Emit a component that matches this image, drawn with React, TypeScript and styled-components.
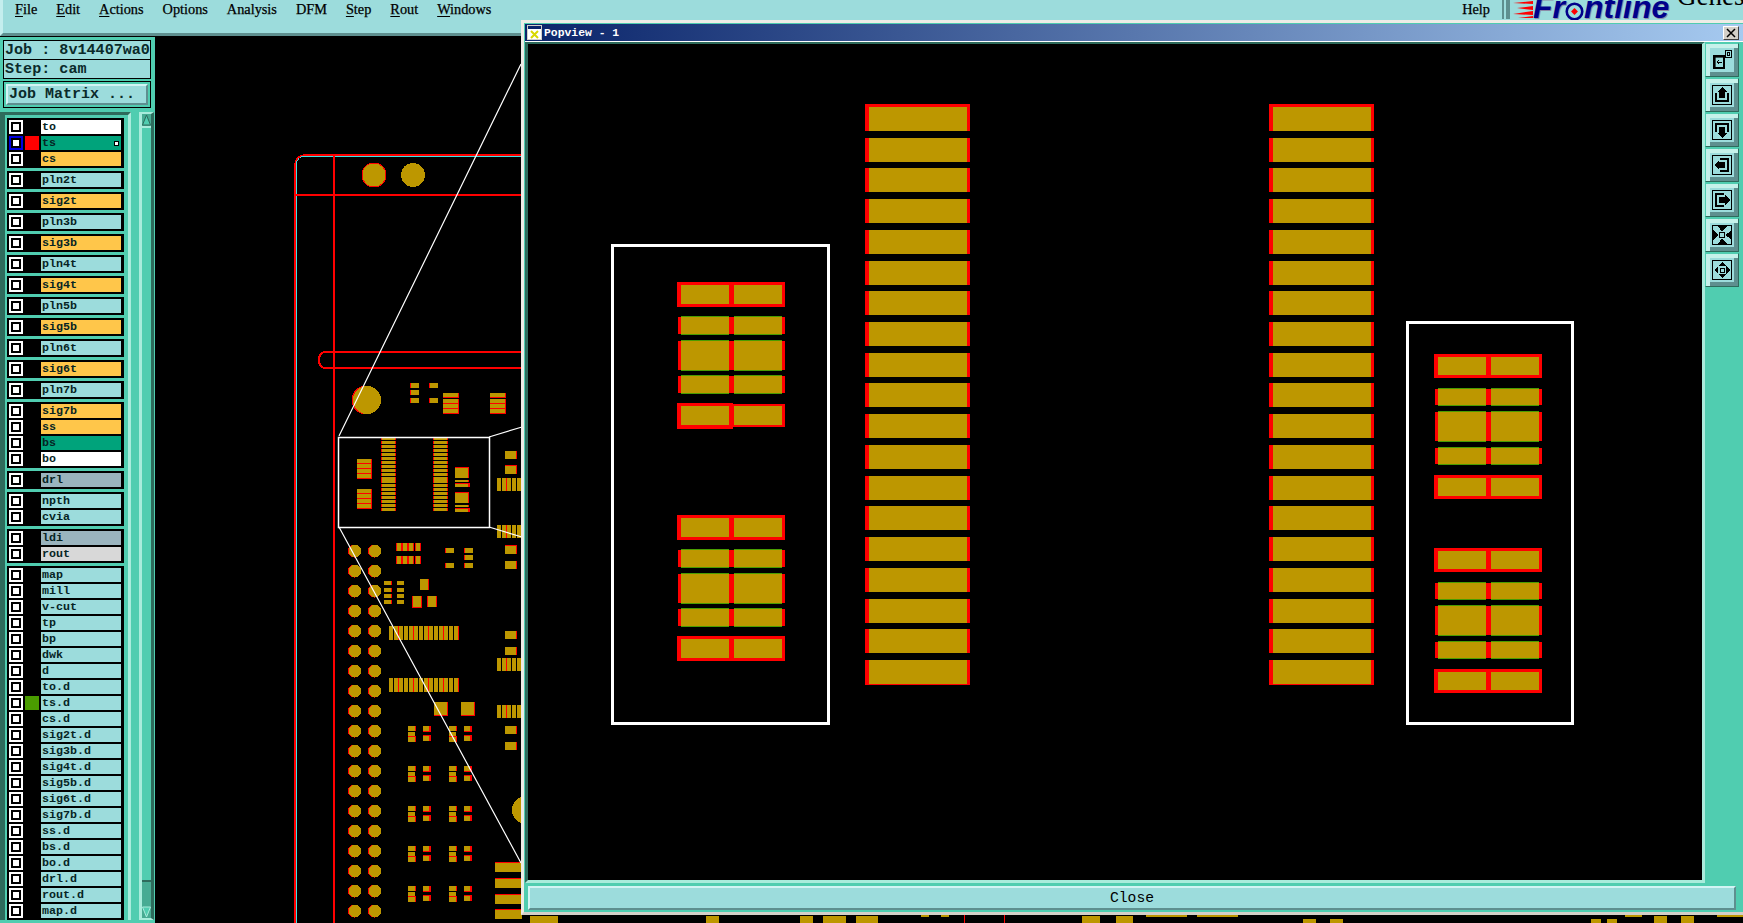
import React from "react";
import styled, { createGlobalStyle } from "styled-components";

const TEAL = "#50cdb0";
const CYAN = "#9cdcdc";
const DARK = "#2e6b5c";
const LIGHT = "#a9ecdc";
const GOLD = "#bd9700";
const RED = "#ff0000";
const GREEN = "#4a9c00";

const GlobalStyle = createGlobalStyle`
  html, body {
    margin: 0;
    height: 100%;
    overflow: hidden;
    background: #000;
    font-family: "Liberation Mono", monospace;
  }
`;

type LayerColor = "white" | "green" | "orange" | "cyan" | "slate" | "gray";

interface Layer {
  name: string;
  color: LayerColor;
  swatch?: string;
  active?: boolean;
  mark?: boolean;
}

const layerBg: Record<LayerColor, string> = {
  white: "#ffffff",
  green: "#00a37b",
  orange: "#ffc64a",
  cyan: CYAN,
  slate: "#9ab4be",
  gray: "#d8d8d8",
};

const cy = (name: string): Layer => ({ name, color: "cyan" });
const or = (name: string): Layer => ({ name, color: "orange" });

const layerGroups: Layer[][] = [
  [
    { name: "to", color: "white" },
    { name: "ts", color: "green", swatch: RED, active: true, mark: true },
    or("cs"),
  ],
  [cy("pln2t")],
  [or("sig2t")],
  [cy("pln3b")],
  [or("sig3b")],
  [cy("pln4t")],
  [or("sig4t")],
  [cy("pln5b")],
  [or("sig5b")],
  [cy("pln6t")],
  [or("sig6t")],
  [cy("pln7b")],
  [or("sig7b"), or("ss"), { name: "bs", color: "green" }, { name: "bo", color: "white" }],
  [{ name: "drl", color: "slate" }],
  [cy("npth"), cy("cvia")],
  [{ name: "ldi", color: "slate" }, { name: "rout", color: "gray" }],
  [
    cy("map"),
    cy("mill"),
    cy("v-cut"),
    cy("tp"),
    cy("bp"),
    cy("dwk"),
    cy("d"),
    cy("to.d"),
    { name: "ts.d", color: "cyan", swatch: GREEN },
    cy("cs.d"),
    cy("sig2t.d"),
    cy("sig3b.d"),
    cy("sig4t.d"),
    cy("sig5b.d"),
    cy("sig6t.d"),
    cy("sig7b.d"),
    cy("ss.d"),
    cy("bs.d"),
    cy("bo.d"),
    cy("drl.d"),
    cy("rout.d"),
    cy("map.d"),
  ],
];

const menus: [string, boolean][] = [
  ["File", true],
  ["Edit", true],
  ["Actions", true],
  ["Options", false],
  ["Analysis", false],
  ["DFM", false],
  ["Step", true],
  ["Rout", true],
  ["Windows", true],
];

const range = (n: number) => Array.from({ length: n }, (_, i) => i);

interface PadProps {
  x: number;
  y: number;
  w: number;
  h: number;
  l?: number;
  r?: number;
  t?: number;
  b?: number;
}

// gold copper with the red solder mask edge showing round it
const Pad = ({ x, y, w, h, l = 0, r = 1, t = 0, b = 0 }: PadProps) => (
  <>
    <rect x={x - l} y={y - t} width={w + l + r} height={h + t + b} fill={RED} />
    <rect x={x} y={y} width={w} height={h} fill={GOLD} />
  </>
);

const Cluster = ({ y }: { y: number }) => (
  <>
    {[408, 449].map((x) => (
      <React.Fragment key={x}>
        <Pad x={x} y={y} w={7} h={5} r={1} />
        <Pad x={x} y={y + 6} w={7} h={4} r={0} />
        <Pad x={x} y={y + 11} w={7} h={5} r={1} t={1} />
      </React.Fragment>
    ))}
    {[423, 464].map((x) => (
      <React.Fragment key={x}>
        <Pad x={x} y={y} w={6} h={5} r={2} b={1} />
        <Pad x={x} y={y + 10} w={6} h={5} r={2} t={1} />
      </React.Fragment>
    ))}
  </>
);

const FingerStrip = ({ x, y, n, h }: { x: number; y: number; n: number; h: number }) => (
  <>
    {range(n).map((i) => (
      <Pad key={i} x={x + i * 5} y={y} w={3.5} h={h} r={i % 3 === 1 ? 1 : 0} />
    ))}
  </>
);

const BoardView = () => (
  <CanvasSvg viewBox="155 37 1588 886" shapeRendering="crispEdges">
    <path d="M296 923V166q0-10 10-10H522" fill="none" stroke="#3fe0e6" strokeWidth="1" />
    <path d="M295 923V166q0-11 11-11H522" fill="none" stroke={RED} strokeWidth="1.5" />
    <rect x="333" y="156" width="2" height="767" fill={RED} />
    <rect x="296" y="194" width="226" height="2" fill={RED} />
    <circle cx="374" cy="175" r="12.5" fill={RED} />
    <circle cx="374" cy="175" r="11.5" fill={GOLD} />
    <circle cx="413" cy="175" r="12" fill={GOLD} />
    <path d="M522 352H326q-7 0-7 8t7 8H522" fill="none" stroke={RED} strokeWidth="2" />
    <circle cx="366" cy="400" r="14.5" fill={RED} />
    <circle cx="367" cy="400" r="14" fill={GOLD} />

    {[383, 390, 398].map((y) => <Pad key={y} x={411} y={y} w={8} h={5} l={1} r={0} />)}
    {[383, 398].map((y) => <Pad key={y} x={430} y={y} w={8} h={5} l={1} r={0} />)}
    {[443, 490].map((x) =>
      [393, 399, 404, 409].map((y) => <Pad key={x + y} x={x} y={y} w={15} h={4} b={1} />)
    )}

    {[381, 433].map((x) =>
      range(19).map((i) => (
        <Pad key={x + i} x={x + 1} y={437 + i * 3.95} w={13} h={3} l={1} r={1} />
      ))
    )}
    {[459, 489].map((y) =>
      [0, 5, 10, 15].map((d) => <Pad key={y + d} x={357} y={y + d} w={14} h={4} b={1} r={1} />)
    )}
    {[468, 493].map((y) => (
      <React.Fragment key={y}>
        <Pad x={455} y={y} w={13} h={10} r={1} t={1} />
        <Pad x={455} y={y + 12} w={13} h={2} />
        <Pad x={455} y={y + 16} w={13} h={3} t={1} r={2} />
      </React.Fragment>
    ))}

    {[355, 375].map((x) =>
      range(19).map((i) => (
        <React.Fragment key={x + i}>
          <circle cx={x - 0.5} cy={551 + i * 20} r="6.5" fill={RED} />
          <circle cx={x} cy={551 + i * 20} r="6.2" fill={GOLD} />
        </React.Fragment>
      ))
    )}

    {[397, 404, 410, 416].map((x, i) => (
      <React.Fragment key={x}>
        <Pad x={397 + i * 6.2} y={543} w={4} h={8} l={1} />
        <Pad x={397 + i * 6.2} y={556} w={4} h={8} l={1} />
      </React.Fragment>
    ))}
    <Pad x={446} y={548} w={8} h={5} l={1} r={0} />
    <Pad x={446} y={563} w={8} h={5} l={1} r={0} />
    {[548, 555, 563].map((y) => <Pad key={y} x={465} y={y} w={8} h={5} l={1} r={0} />)}
    {[581, 588, 594, 600].map((y) => (
      <React.Fragment key={y}>
        <Pad x={384} y={y} w={7} h={4} r={1} />
        <Pad x={397} y={y} w={7} h={4} r={0} />
      </React.Fragment>
    ))}
    <Pad x={420} y={579} w={8} h={11} />
    <Pad x={413} y={596} w={8} h={11} l={1} b={1} />
    <Pad x={428} y={596} w={8} h={11} l={1} />
    <FingerStrip x={389} y={626} n={14} h={14} />
    <FingerStrip x={389} y={678} n={14} h={14} />
    <Pad x={434} y={702} w={13} h={13} r={1} b={1} />
    <Pad x={461} y={702} w={13} h={13} r={1} b={1} />
    {[726, 766, 806, 846, 886].map((y) => <Cluster key={y} y={y} />)}

    {[451, 466, 546, 561, 631, 647, 726, 742].map((y) => (
      <Pad key={y} x={505} y={y} w={11} h={8} r={1} t={y === 466 || y === 546 ? 1 : 0} />
    ))}
    {[478, 525, 658, 705].map((y) => <FingerStrip key={y} x={497} y={y} n={5} h={13} />)}
    <circle cx="526" cy="810" r="14" fill={GOLD} />
    {[863, 879, 895, 910].map((y) => <Pad key={y} x={495} y={y} w={27} h={9} t={1} r={0} />)}

    {[
      [530, 28], [706, 13], [800, 13], [823, 23], [856, 22], [1082, 18], [1116, 17],
      [1303, 13], [1330, 13], [1591, 10], [1607, 10], [1654, 13], [1681, 13],
    ].map(([x, w]) => (
      <rect key={x} x={x} y={x > 1300 && x < 1620 ? 919 : 916} width={w} height="7" fill={GOLD} />
    ))}
    {[[921, 8], [941, 8], [1146, 41], [1197, 41], [1717, 26], [1625, 17]].map(([x, w]) => (
      <rect key={x} x={x} y="915" width={w} height="2" fill={GOLD} />
    ))}
    <rect x="964" y="915" width="1" height="8" fill={RED} />
    <rect x="1004" y="915" width="1" height="8" fill={RED} />

    <g fill="none" stroke="#fff" strokeWidth="1.2" shapeRendering="auto">
      <rect x="338.5" y="437.5" width="151" height="90" strokeWidth="1.5" />
      <path d="M339 436L521 64M489 437L522 427M489 527L522 537M339 527L521 863" />
    </g>
  </CanvasSvg>
);

type RowKind = "box" | "half" | "plain";

const padRows = (first: [RowKind, number, number][], shift: number) => [
  ...first,
  ...first.map(([k, y, h]): [RowKind, number, number] => [k === "half" ? "box" : k, y + shift, h]),
];

const PadRow = ({ kind, x, y, h }: { kind: RowKind; x: number; y: number; h: number }) => (
  <>
    {kind === "box" && <rect x={x - 4} y={y - 3} width={108} height={h + 6} fill={RED} />}
    {kind === "half" && (
      <>
        <rect x={x + 49} y={y - 2} width={55} height={h + 4} fill={RED} />
        <rect x={x - 4} y={y - 3} width={56} height={h + 7} fill={RED} />
      </>
    )}
    {kind === "plain" && (
      <>
        <rect x={x - 3} y={y + 1} width={107} height={h - 2} fill={RED} />
        <rect x={x} y={y} width={48} height={h} fill={GREEN} />
        <rect x={x + 53} y={y} width={48} height={h} fill={GREEN} />
        <rect x={x} y={y + 1} width={48} height={h - 2} fill={GOLD} />
        <rect x={x + 53} y={y + 1} width={48} height={h - 2} fill={GOLD} />
      </>
    )}
    {kind !== "plain" && (
      <>
        <rect x={x} y={y} width={48} height={h} fill={GOLD} />
        <rect x={x + 53} y={y} width={48} height={h} fill={GOLD} />
      </>
    )}
  </>
);

const leftRows = padRows(
  [["box", 285, 19], ["plain", 316, 19], ["plain", 340, 31], ["plain", 375, 19], ["half", 406, 19]],
  233
);
const rightRows = padRows(
  [["box", 357, 18], ["plain", 388, 18], ["plain", 411, 31], ["plain", 447, 18], ["box", 478, 18]],
  194
);

const PopviewDrawing = () => (
  <CanvasSvg viewBox="528 44 1174 836" shapeRendering="crispEdges">
    <rect x="612.5" y="245.5" width="216" height="478" fill="none" stroke="#fff" strokeWidth="3" />
    <rect x="1407.5" y="322.5" width="165" height="401" fill="none" stroke="#fff" strokeWidth="3" />
    {leftRows.map(([k, y, h]) => <PadRow key={y} kind={k} x={681} y={y} h={h} />)}
    {rightRows.map(([k, y, h]) => <PadRow key={y} kind={k} x={1438} y={y} h={h} />)}
    {[869, 1273].map((x) =>
      range(19).map((i) => {
        const y = Math.round(107 + i * 30.72);
        return (
          <React.Fragment key={x + i}>
            <rect
              x={x - 4}
              y={i === 0 ? y - 3 : y}
              width={105}
              height={i === 0 ? 27 : i === 18 ? 25 : 24}
              fill={RED}
            />
            <rect x={x} y={y} width={98} height={24} fill={GOLD} />
          </React.Fragment>
        );
      })
    )}
  </CanvasSvg>
);

const IconFrame = () => <rect x="0.5" y="0.5" width="19" height="19" fill="none" stroke="#000" />;

const ArrowIcon = ({ turn }: { turn: number }) => (
  <IconSvg viewBox="0 0 20 20" shapeRendering="crispEdges">
    <IconFrame />
    <g transform={`rotate(${turn} 10 10)`}>
      <path d="M3 8V17H17V8H15V15H5V8Z" fill="#000" />
      <path d="M10 2L15 7H13V13H7V7H5Z" fill="#000" />
    </g>
  </IconSvg>
);

const PopoutIcon = () => (
  <IconSvg viewBox="0 0 20 20" shapeRendering="crispEdges">
    <path d="M1 5H13V19H1ZM3 7V17H11V7Z" fill="#000" fillRule="evenodd" />
    <path d="M3 7H11V17H3Z" fill="none" stroke="#000" strokeWidth="0.6" />
    <rect x="13.5" y="0.5" width="6" height="7" fill="none" stroke="#000" />
    <rect x="15.5" y="2.5" width="2" height="3" fill="none" stroke="#000" />
    <path d="M5 12H10M5 12L7 10M5 12L7 14" fill="none" stroke="#000" />
  </IconSvg>
);

const FitIcon = () => (
  <IconSvg viewBox="0 0 20 20" shapeRendering="crispEdges">
    <IconFrame />
    <rect x="7.5" y="7.5" width="5" height="5" fill="none" stroke="#000" strokeWidth="1.5" />
    <path
      d="M5 1H15L12 4L11 6H9L8 4ZM5 19H15L12 16L11 14H9L8 16ZM1 5L4 8L6 9V11L4 12L1 15ZM19 5L16 8L14 9V11L16 12L19 15Z"
      fill="#000"
    />
  </IconSvg>
);

const SpreadIcon = () => (
  <IconSvg viewBox="0 0 20 20" shapeRendering="crispEdges">
    <IconFrame />
    <rect x="8" y="8" width="4" height="4" fill="none" stroke="#000" />
    <path d="M10 2L14 6H6ZM10 18L14 14H6ZM2 10L6 6V14ZM18 10L14 6V14Z" fill="#000" />
  </IconSvg>
);

const App = () => (
  <Page>
    <GlobalStyle />
    <MenuBar>
      {menus.map(([label, under]) => (
        <MenuItem key={label}>
          {under ? <Mnemonic>{label[0]}</Mnemonic> : label[0]}
          {label.slice(1)}
        </MenuItem>
      ))}
      <HelpItem>Help</HelpItem>
      <Divider />
      <SpeedLines viewBox="0 0 20 18">
        <path d="M0 3L20 1V4ZM4 8L20 6V10ZM0 14L20 11V15ZM5 18L20 16V18Z" fill={RED} />
      </SpeedLines>
      <LogoText>
        Fr
        <LogoRing viewBox="0 0 22 22">
          <circle cx="11" cy="11" r="9" fill="none" stroke="#00008b" strokeWidth="3" />
          <path d="M11 7L15 11L11 15L7 11Z" fill={RED} />
        </LogoRing>
        ntline
      </LogoText>
      <ProductName>Genesis</ProductName>
    </MenuBar>

    <Body>
      <LeftPanel>
        <InfoBox>
          <InfoLine>Job : 8v14407wa0</InfoLine>
          <InfoLine>Step: cam</InfoLine>
        </InfoBox>
        <MatrixFrame>
          <MatrixButton>Job Matrix ...</MatrixButton>
        </MatrixFrame>
        <ListArea>
          <ListWell>
            {layerGroups.map((group) => (
              <LayerGroup key={group[0].name}>
                {group.map((layer) => (
                  <LayerRow key={layer.name}>
                    <CheckBox $active={layer.active}>
                      <CheckDot />
                    </CheckBox>
                    <Swatch $color={layer.swatch} />
                    <LayerName $color={layer.color}>
                      {layer.name}
                      {layer.mark && <LayerMark />}
                    </LayerName>
                  </LayerRow>
                ))}
              </LayerGroup>
            ))}
          </ListWell>
          <ScrollBar>
            <Trough>
              <ScrollArrow viewBox="0 0 9 12">
                <path d="M4.5 1L8.5 11H0.5Z" fill={TEAL} stroke={DARK} />
              </ScrollArrow>
              <Thumb />
              <ScrollArrow viewBox="0 0 9 12">
                <path d="M4.5 11L8.5 1H0.5Z" fill={TEAL} stroke={LIGHT} />
              </ScrollArrow>
            </Trough>
          </ScrollBar>
        </ListArea>
      </LeftPanel>
      <Canvas>
        <BoardView />
      </Canvas>
    </Body>

    <Popview>
      <TitleBar>
        <WindowIcon viewBox="0 0 15 15">
          <rect width="15" height="15" fill="#d4d0c8" />
          <rect x="1" y="1" width="13" height="13" fill="#fff" />
          <rect x="1" y="1" width="13" height="3" fill="#0a246a" />
          <path d="M4 6L11 13M11 6L4 13" stroke="#d8d800" strokeWidth="2" />
        </WindowIcon>
        <TitleText>Popview - 1</TitleText>
        <CloseBox>
          <svg viewBox="0 0 10 10" width="10" height="10">
            <path d="M1 1L9 9M9 1L1 9" stroke="#000" strokeWidth="1.5" />
          </svg>
        </CloseBox>
      </TitleBar>
      <PopBody>
        <Viewport>
          <PopviewDrawing />
        </Viewport>
        <ToolColumn>
          <ToolButton><PopoutIcon /></ToolButton>
          <ToolButton><ArrowIcon turn={0} /></ToolButton>
          <ToolButton><ArrowIcon turn={180} /></ToolButton>
          <ToolButton><ArrowIcon turn={-90} /></ToolButton>
          <ToolButton><ArrowIcon turn={90} /></ToolButton>
          <ToolButton><FitIcon /></ToolButton>
          <ToolButton><SpreadIcon /></ToolButton>
        </ToolColumn>
      </PopBody>
      <Footer>
        <CloseButton>Close</CloseButton>
      </Footer>
    </Popview>
  </Page>
);

export default App;

const Page = styled.div`
  position: relative;
  width: 100%;
  height: 100vh;
  overflow: hidden;
  display: flex;
  flex-direction: column;
  background: #000;
`;

const MenuBar = styled.div`
  height: 33px;
  flex: none;
  display: flex;
  align-items: flex-start;
  gap: 19px;
  padding-left: 12px;
  background: ${CYAN};
  border-left: 3px solid #c4eeee;
  border-bottom: 3px solid #5e8f8f;
  margin-bottom: 1px;
  overflow: hidden;
  font-family: "Liberation Serif", serif;
  color: #000;
`;

const MenuItem = styled.span`
  padding-top: 1px;
  font-size: 14.3px;
  line-height: 16px;
  -webkit-text-stroke: 0.25px #000;
`;

const Mnemonic = styled.span`
  text-decoration: underline;
  text-underline-offset: 2px;
`;

const HelpItem = styled(MenuItem)`
  margin-left: auto;
`;

const Divider = styled.div`
  width: 2px;
  height: 19px;
  flex: none;
  margin-left: -7px;
  background: #5e8f8f;
  border-right: 2px solid ${CYAN};
  box-shadow: 4px 0 0 #5e8f8f;
`;

const SpeedLines = styled.svg`
  width: 20px;
  height: 18px;
  flex: none;
  margin-left: -12px;
`;

const LogoText = styled.div`
  display: flex;
  align-items: center;
  flex: none;
  width: 144px;
  height: 20px;
  margin: -3px 0 0 -19px;
  font-family: "Liberation Sans", sans-serif;
  font-weight: bold;
  font-style: italic;
  font-size: 32px;
  line-height: 20px;
  color: #00008b;
  text-shadow: 1px 1px 0 #8c8ca8;
  white-space: nowrap;
`;

const LogoRing = styled.svg`
  width: 19px;
  height: 19px;
  flex: none;
  margin-top: 8px;
`;

const ProductName = styled.div`
  flex: none;
  width: 66px;
  margin: -17px 0 0 -19px;
  font-size: 27px;
  line-height: 27px;
  white-space: nowrap;
`;

const Body = styled.div`
  flex: 1;
  min-height: 0;
  display: flex;
`;

const LeftPanel = styled.div`
  width: 155px;
  flex: none;
  display: flex;
  flex-direction: column;
  background: ${TEAL};
  padding-top: 3px;
  box-sizing: border-box;
`;

const InfoBox = styled.div`
  margin: 0 4px 2px 3px;
  border: 1px solid #000;
  background: #000;
  display: flex;
  flex-direction: column;
  gap: 1px;
`;

const InfoLine = styled.div`
  height: 18px;
  background: ${CYAN};
  padding-left: 1px;
  font-size: 15.1px;
  line-height: 18px;
  font-weight: bold;
  color: #0a2a2a;
  white-space: nowrap;
  overflow: hidden;
`;

const MatrixFrame = styled.div`
  height: 27px;
  box-sizing: border-box;
  margin: 0 4px 4px 3px;
  border: 1px solid #000;
  padding: 2px;
  display: flex;
`;

const MatrixButton = styled.div`
  flex: 1;
  background: ${CYAN};
  border: 2px solid;
  border-color: #d2f4f4 #5e8f8f #5e8f8f #d2f4f4;
  padding-left: 1px;
  font-size: 15px;
  line-height: 17px;
  font-weight: bold;
  color: #0a2a2a;
  white-space: nowrap;
`;

const ListArea = styled.div`
  flex: 1;
  min-height: 0;
  display: flex;
  padding-bottom: 3px;
`;

const ListWell = styled.div`
  width: 119px;
  flex: none;
  display: flex;
  flex-direction: column;
  gap: 3px;
  padding: 3px 2px 0 2px;
  border-top: 3px solid ${DARK};
  border-left: 5px solid ${DARK};
  border-right: 3px solid ${LIGHT};
  overflow: hidden;
`;

const LayerGroup = styled.div`
  flex: none;
  background: #000;
  padding: 1px 0;
  width: 117px;
`;

const LayerRow = styled.div`
  height: 16px;
  display: flex;
  align-items: center;
  gap: 2px;
  padding-left: 2px;
`;

const CheckBox = styled.div<{ $active?: boolean }>`
  width: 14px;
  height: 14px;
  box-sizing: border-box;
  flex: none;
  display: flex;
  align-items: center;
  justify-content: center;
  background: ${(p) => (p.$active ? "#0000e0" : "#fff")};
`;

const CheckDot = styled.div`
  width: 6px;
  height: 6px;
  background: #fff;
  box-shadow: 0 0 0 2px #000;
`;

const Swatch = styled.div<{ $color?: string }>`
  width: 14px;
  height: 14px;
  flex: none;
  background: ${(p) => p.$color ?? "#000"};
`;

const LayerName = styled.div<{ $color: LayerColor }>`
  width: 80px;
  height: 14px;
  flex: none;
  display: flex;
  justify-content: space-between;
  align-items: center;
  padding: 0 1px 0 1px;
  box-sizing: border-box;
  background: ${(p) => layerBg[p.$color]};
  font-size: 11.67px;
  line-height: 14px;
  font-weight: bold;
  color: #062424;
`;

const LayerMark = styled.span`
  width: 5px;
  height: 5px;
  background: #fff;
  border: 1px solid #000;
  box-sizing: border-box;
  margin-right: 1px;
`;

const ScrollBar = styled.div`
  flex: 1;
  padding-left: 8px;
  padding-right: 3px;
  display: flex;
`;

const Trough = styled.div`
  flex: 1;
  display: flex;
  flex-direction: column;
  background: #47ab93;
  border-left: 3px solid ${LIGHT};
  border-right: 3px solid ${DARK};
  border-top: 2px solid ${LIGHT};
  border-bottom: 2px solid ${LIGHT};
`;

const ScrollArrow = styled.svg`
  width: 9px;
  height: 12px;
  flex: none;
`;

const Thumb = styled.div`
  height: 756px;
  flex: none;
  background: ${TEAL};
  border-top: 2px solid ${LIGHT};
  border-bottom: 2px solid ${DARK};
  box-sizing: border-box;
  margin-bottom: 24px;
`;

const Canvas = styled.div`
  flex: 1;
  min-width: 0;
  background: #000;
`;

const CanvasSvg = styled.svg`
  display: block;
  width: 100%;
  height: 100%;
`;

const Popview = styled.div`
  position: absolute;
  left: 521px;
  top: 20px;
  width: 1226px;
  height: 895px;
  box-sizing: border-box;
  display: flex;
  flex-direction: column;
  background: ${TEAL};
  border: 3px solid #d4d0c8;
  border-top-color: #eeece6;
  border-left-color: #eeece6;
  padding: 1px;
`;

const TitleBar = styled.div`
  height: 17px;
  flex: none;
  display: flex;
  align-items: center;
  gap: 2px;
  padding: 0 4px 0 2px;
  background: linear-gradient(to right, #0a246a, #a6caf0);
  border-bottom: 1px solid #fff;
`;

const WindowIcon = styled.svg`
  width: 15px;
  height: 15px;
  flex: none;
`;

const TitleText = styled.span`
  flex: 1;
  font-size: 11.4px;
  font-weight: bold;
  color: #fff;
  white-space: nowrap;
`;

const CloseBox = styled.div`
  width: 16px;
  height: 14px;
  box-sizing: border-box;
  display: flex;
  align-items: center;
  justify-content: center;
  background: #d4d0c8;
  border: 1px solid;
  border-color: #fff #404040 #404040 #fff;
`;

const PopBody = styled.div`
  flex: 1;
  min-height: 0;
  display: flex;
`;

const Viewport = styled.div`
  width: 1174px;
  flex: none;
  background: #000;
  border-top: 2px solid ${DARK};
  border-left: 3px solid ${DARK};
  border-right: 3px solid ${LIGHT};
  border-bottom: 3px solid ${LIGHT};
`;

const ToolColumn = styled.div`
  flex: 1;
  display: flex;
  flex-direction: column;
  gap: 1px;
  padding-top: 1px;
`;

const ToolButton = styled.div`
  width: 34px;
  height: 34px;
  box-sizing: border-box;
  display: flex;
  align-items: center;
  justify-content: center;
  background: ${CYAN};
  border: 1px solid ${DARK};
  border-top-color: ${TEAL};
  border-left-color: ${TEAL};
  box-shadow: inset 4px 4px 0 #c6f1ea, inset -4px -4px 0 #5e8f8f;
`;

const IconSvg = styled.svg`
  width: 20px;
  height: 20px;
  display: block;
`;

const Footer = styled.div`
  height: 28px;
  flex: none;
  box-sizing: border-box;
  padding: 3px 7px 1px 3px;
  display: flex;
`;

const CloseButton = styled.div`
  flex: 1;
  display: flex;
  align-items: center;
  justify-content: center;
  background: ${CYAN};
  border: 2px solid;
  border-color: #d2f4f4 #5e8f8f #5e8f8f #d2f4f4;
  font-size: 14.67px;
  color: #000;
`;
